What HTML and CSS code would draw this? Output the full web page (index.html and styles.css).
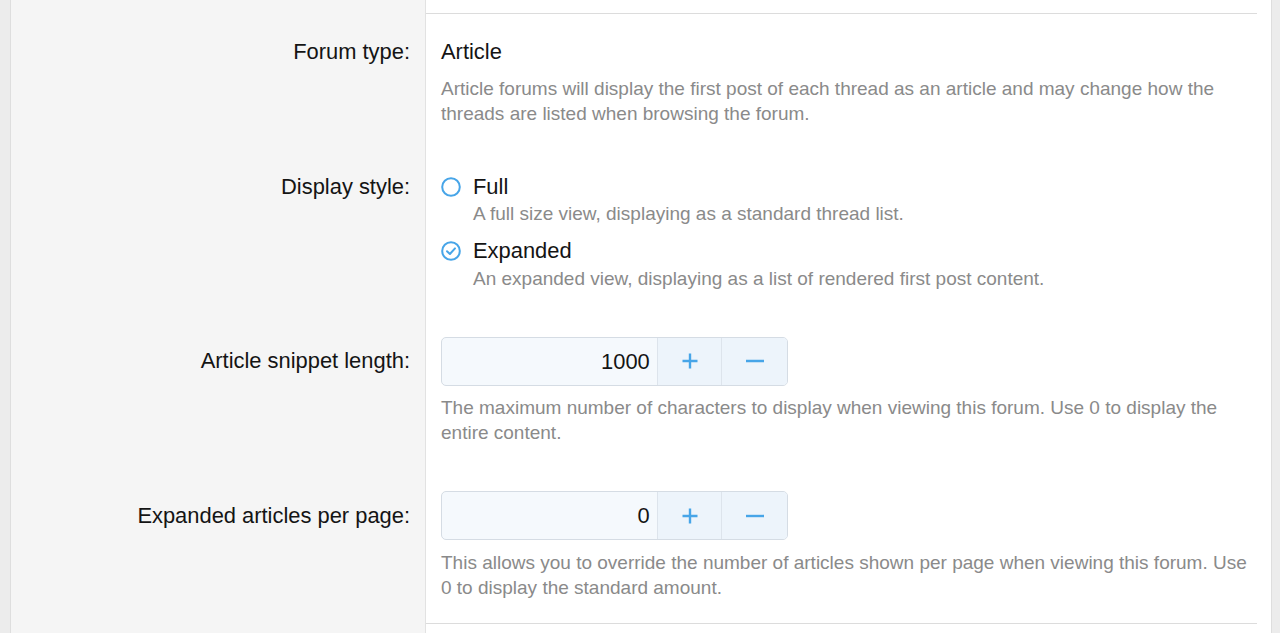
FILE: index.html
```html
<!DOCTYPE html>
<html lang="en">
<head>
<meta charset="utf-8">
<title>Forum options</title>
<link rel="stylesheet" href="styles.css">
</head>
<body>
<div class="block">
  <div class="row sep-row">
    <div class="dt"></div>
    <div class="dd"><div class="sep sep-top"></div></div>
  </div>

  <div class="row">
    <div class="dt"><span class="label">Forum type:</span></div>
    <div class="dd">
      <div class="value">Article</div>
      <div class="explain">Article forums will display the first post of each thread as an article and may change how the threads are listed when browsing the forum.</div>
    </div>
  </div>

  <div class="row">
    <div class="dt"><span class="label">Display style:</span></div>
    <div class="dd">
      <div class="choice">
        <div class="choice-main">
          <svg class="radio" viewBox="0 0 20 20" width="20" height="20"><circle cx="10" cy="10" r="8.8" fill="none" stroke="#47a5e8" stroke-width="2"/></svg>
          <span>Full</span>
        </div>
        <div class="hint">A full size view, displaying as a standard thread list.</div>
      </div>
      <div class="choice choice-2">
        <div class="choice-main">
          <svg class="radio" viewBox="0 0 20 20" width="20" height="20"><circle cx="10" cy="10" r="8.8" fill="none" stroke="#47a5e8" stroke-width="2"/><path d="M6 10.2 L8.9 13 L14 7.4" fill="none" stroke="#47a5e8" stroke-width="2" stroke-linecap="round" stroke-linejoin="round"/></svg>
          <span>Expanded</span>
        </div>
        <div class="hint">An expanded view, displaying as a list of rendered first post content.</div>
      </div>
    </div>
  </div>

  <div class="row">
    <div class="dt dt-input"><span class="label">Article snippet length:</span></div>
    <div class="dd">
      <div class="spinner">
        <div class="spin-value">1000</div>
        <div class="spin-btn"><svg viewBox="0 0 18 18" width="18" height="18"><path d="M9 1.5 V16.5 M1.5 9 H16.5" stroke="#47a5e8" stroke-width="2.4" fill="none"/></svg></div>
        <div class="spin-btn"><svg viewBox="0 0 20 18" width="20" height="18"><path d="M1 9 H19" stroke="#47a5e8" stroke-width="2.4" fill="none"/></svg></div>
      </div>
      <div class="explain explain-input">The maximum number of characters to display when viewing this forum. Use 0 to display the entire content.</div>
    </div>
  </div>

  <div class="row">
    <div class="dt dt-input"><span class="label">Expanded articles per page:</span></div>
    <div class="dd">
      <div class="spinner">
        <div class="spin-value">0</div>
        <div class="spin-btn"><svg viewBox="0 0 18 18" width="18" height="18"><path d="M9 1.5 V16.5 M1.5 9 H16.5" stroke="#47a5e8" stroke-width="2.4" fill="none"/></svg></div>
        <div class="spin-btn"><svg viewBox="0 0 20 18" width="20" height="18"><path d="M1 9 H19" stroke="#47a5e8" stroke-width="2.4" fill="none"/></svg></div>
      </div>
      <div class="explain explain-input">This allows you to override the number of articles shown per page when viewing this forum. Use 0 to display the standard amount.</div>
    </div>
  </div>

  <div class="row sep-row">
    <div class="dt"></div>
    <div class="dd"><div class="sep"></div><div class="tail"></div></div>
  </div>
</div>
</body>
</html>
```

FILE: styles.css
```css
html, body {
  margin: 0;
  padding: 0;
  height: 100%;
  overflow: hidden;
}
body {
  background: #ececec;
  font-family: "Liberation Sans", Arial, Helvetica, sans-serif;
  color: #141414;
}
.block {
  margin-left: 10px;
  width: 1260px;
  min-height: 100%;
  border-left: 1px solid #dedede;
  border-right: 1px solid #dedede;
  background: linear-gradient(to right, #f5f5f5 0, #f5f5f5 414px, #e2e2e2 414px, #e2e2e2 415px, #ffffff 415px);
}
.row {
  display: flex;
}
.dt {
  width: 399px;
  flex: none;
  padding: 23px 15px 23px 0;
  text-align: right;
  font-size: 21.9px;
  line-height: 30px;
  border-right: 1px solid #e2e2e2;
}
.dt-input {
  padding-top: 32.5px;
}
.dd {
  flex: 1;
  padding: 23px 14px 23px 15px;
  min-width: 0;
}
.sep-row .dt, .sep-row .dd {
  padding-top: 0;
  padding-bottom: 0;
}
.sep-row .dd {
  padding-left: 0;
}
.sep {
  height: 1px;
  background: #dcdcdc;
}
.sep-top {
  margin-top: 13px;
}
.tail {
  height: 40px;
}
.value {
  font-size: 21.9px;
  line-height: 30px;
}
.explain {
  font-size: 19px;
  line-height: 25px;
  color: #8a8a8a;
  margin-top: 8.5px;
}
.explain-input {
  margin-top: 9.5px;
}
.choice-main {
  display: flex;
  align-items: center;
  gap: 12px;
  font-size: 21.9px;
  line-height: 30px;
}
.radio {
  flex: none;
  display: block;
}
.hint {
  padding-left: 32px;
  margin-top: -1px;
  font-size: 19px;
  line-height: 25px;
  color: #8a8a8a;
}
.choice-2 {
  margin-top: 10.5px;
}
.choice-2 .hint {
  margin-top: -0.5px;
}
.spinner {
  display: flex;
  width: 345px;
  height: 47px;
  border: 1px solid #d5dce4;
  border-radius: 5px;
  overflow: hidden;
  background: #f5f9fd;
}
.spin-value {
  width: 209px;
  padding-right: 7px;
  text-align: right;
  font-size: 21.9px;
  line-height: 47px;
  color: #141414;
}
.spin-btn {
  width: 64px;
  display: flex;
  align-items: center;
  justify-content: center;
  background: #edf4fb;
  border-left: 1px solid #dde4ec;
}
.spin-btn:last-child {
  width: 65px;
}
.spin-btn svg {
  display: block;
}
```
